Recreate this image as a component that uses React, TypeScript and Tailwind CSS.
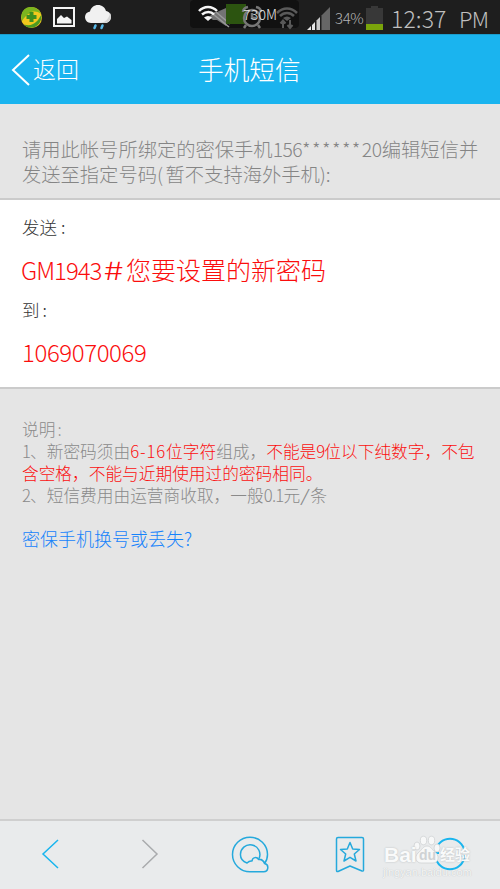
import React from 'react'

function StatusBar() {
    return (
        <div className="relative h-[35px] bg-[#1e1e1e] border-b border-[#1a9ccc]">
            <svg width="500" height="34" viewBox="0 0 500 34" fill="none">
                <circle cx="31.500" cy="17.500" r="10.500" fill="#f2c81d" />
                <path d="M22 13C24 8 29 6 34 7.500C38 8.500 40 11 41 14C37 11 33 11 30 13C26 15 24 18 22 21C21 18 21 15.500 22 13Z" fill="#7cb51f" />
                <path d="M41.500 15C42 20 39 25 35 27C31 28.500 27 28 24 24.500C29 26 33 25 36 22C39 19.500 39.500 17 41.500 15Z" fill="#4c9a22" />
                <path d="M31.500 12v10M26.500 17h10" stroke="#3c8f20" strokeWidth="4" />

                <rect x="54" y="8" width="20" height="18" stroke="#f4f4f4" strokeWidth="2" />
                <path d="M57 23.500V19L61 15L64 18L67 16.500L71.500 20V23.500Z" fill="#f4f4f4" />

                <path d="M91 23C87.500 23 85 20 85 17C85 14 87 12 90 11.500C91 7.500 94 5 98 5C102 5 105 7.500 106 11C109 11.500 111 14 111 17C111 20.500 108.500 23 105 23Z" fill="#f1f1f1" />
                <path d="M98 23C105 23 109 19 110 13C111.500 15 111.500 20 108 22C107 22.800 106 23 105 23Z" fill="#d5d5d5" />
                <path d="M95.500 25.500L94.500 28M102.500 25.500L101.500 28" stroke="#58b8e8" strokeWidth="2.500" strokeLinecap="round" />

                <rect x="190" y="0" width="109" height="28" rx="4" fill="#111111" />
                <path d="M209 17L214 12H217L226 8V26L217 20H213Z" fill="#737373" />
                <path d="M213 14L229 27M216 12L230 24" stroke="#9a9a9a" strokeWidth="1.500" />
                <path d="M199 11C204 5.500 212 5.500 217 11M202 14.500C206 11 211 11 214 14.500" stroke="#f5f5f5" strokeWidth="2.500" />
                <path d="M204 17.500Q208 14.500 212 17.500L208 21Z" fill="#f5f5f5" />
                <rect x="226" y="4" width="20" height="20" fill="#2c5410" />
                <circle cx="252" cy="18" r="8" stroke="#777777" strokeWidth="2.500" />
                <path d="M252 13v5h4M246 25L244 28M258 25L260 28" stroke="#777777" strokeWidth="2.500" />
                <path d="M243 12Q243 8 248 7M261 12Q261 8 256 7" stroke="#777777" strokeWidth="2.500" />
                <path d="M277 13C283 7 291 7 297 13M280 16C284 12 290 12 294 16" stroke="#5a5a5a" strokeWidth="2.500" />
                <path d="M283 18Q287 15 291 18L287 21Z" fill="#5a5a5a" />
                <path d="M283 28V21M280.500 23.500L283 20.500L285.500 23.500M290 20V28M287.500 25L290 28L292.500 25" stroke="#595959" strokeWidth="2" />

                <path d="M307 30L311 26V30ZM312 30V25L315 22V30Z" fill="#e6e6e6" />
                <path d="M316.500 30V20.500L320 17V30Z" fill="#c8c8c8" />
                <path d="M321.500 30V15.500L330 7V30Z" fill="#666666" />

                <path d="M366 8H371V6H378V8H383V24H366Z" fill="#383838" />
                <rect x="366" y="24" width="17" height="6" fill="#7aa40b" />
            </svg>
            <span className="absolute left-[243px] top-[4px] text-[14px] leading-5 tracking-[0.2px] text-[#e8e8e8]">730M</span>
            <span className="absolute left-[335px] top-[8px] text-[15px] leading-5 tracking-[-0.4px] text-[#b4b4b4]">34%</span>
            <span className="absolute left-[391px] top-[4px] whitespace-nowrap text-[23px] leading-7 tracking-[0.1px] text-[#bfbfbf]">12:37</span>
            <span className="absolute left-[459px] top-[4px] text-[22px] leading-7 tracking-[-0.8px] text-[#bfbfbf]">PM</span>
        </div>
    )
}

function Header() {
    return (
        <div className="relative flex h-[69px] items-center bg-[#1ab4ef] text-white">
            <svg className="ml-[11px]" width="20" height="32" viewBox="0 0 20 32" fill="none">
                <path d="M18 1L2 16L18 31" stroke="white" strokeWidth="2" />
            </svg>
            <span className="-mt-[3px] ml-[2px] text-[23px] leading-8">返回</span>
            <h1 className="absolute left-[198px] top-[16px] text-[25.700px] leading-9">手机短信</h1>
        </div>
    )
}

function Toolbar() {
    return (
        <div className="relative h-[70px] border-t-2 border-[#cfcfcf] bg-[#e9ebec]">
            <svg width="500" height="68" viewBox="0 821 500 68" fill="none" strokeWidth="1.500">
                <path d="M58 840L43 854L58 868" stroke="#19b5ee" />
                <path d="M142.500 840L157 854L142.500 868" stroke="#a9abad" />
                <g stroke="#25a9dc" strokeLinejoin="round">
                    <path d="M264.500 863.500C266.500 861 267.500 858 267.500 854.500A17.500 17.300 0 1 0 250 871.800H263.500A4.200 4.200 0 0 0 264.500 863.500C263 859.500 261 859 258.500 859.500C257 856.500 252.500 857 252 861C249 860.500 248 862 247 863C241.500 861 240.500 858 240.500 855A9.700 9.700 0 1 1 259 858.500" />
                    <path d="M338 837.500H362Q363.500 837.500 363.500 839V870Q363.500 871.500 362 871L350 866L338 871.500Q336.500 872 336.500 870V839Q336.500 837.500 338 837.500Z" />
                    <path d="M350 842.500L352.700 849L359.500 849.500L354.300 854L356 861L350 857.300L344 861L345.700 854L340.500 849.500L347.300 849Z" />
                </g>
                <path d="M435.500 851A14.700 14.700 0 0 1 464.500 851M464.500 857A14.700 14.700 0 0 1 435.500 857M435 853H439M461 856H465" stroke="#19b5ee" strokeWidth="2" />
                <g fill="#f7f8f8" stroke="#cfd2d3" strokeWidth="0.800">
                    <ellipse cx="417" cy="846" rx="3" ry="4" />
                    <ellipse cx="423.500" cy="840.500" rx="3.200" ry="4.300" />
                    <ellipse cx="431.500" cy="840.500" rx="3.200" ry="4.300" />
                    <ellipse cx="437" cy="848" rx="3" ry="4" />
                    <path d="M427 846C423 846 422 850 418 853C414 857 416 863 421 863H433C438 863 440 857 436 853C432 850 431 846 427 846Z" />
                </g>
            </svg>
            <span className="absolute left-[384px] top-[20px] font-['Liberation_Sans',sans-serif] text-[21px] font-bold leading-7 text-[#f9fafa] [text-shadow:0_0_2px_#b4b8ba]">Bai</span>
            <span className="absolute left-[419px] top-[22px] font-['Liberation_Sans',sans-serif] text-[14px] font-bold leading-6 text-[#cfd2d4]">du</span>
            <span className="absolute left-[440px] top-[23px] text-[15px] font-bold leading-5 text-[#f9fafa] [text-shadow:0_0_2px_#b4b8ba]">经验</span>
            <span className="absolute left-[383px] top-[43px] whitespace-nowrap font-['Liberation_Sans',sans-serif] text-[11px] leading-4 text-[#f6f7f7] [text-shadow:0_0_1px_#aeb2b4]">jingyan.baidu.com</span>
        </div>
    )
}

function App() {
    return (
        <div className="flex h-[889px] w-[500px] flex-col overflow-hidden bg-[#e5e5e5] font-['Noto_Sans_CJK_SC',sans-serif] font-light">
            <StatusBar />
            <Header />

            <div className="h-[96px] whitespace-nowrap border-b-2 border-[#cbcbcb] pl-[22px] pt-[33px] text-[19.300px] leading-[25px] text-[#858585]">
                <p>请用此帐号所绑定的密保手机<span className="tracking-[-0.5px]">156</span><span className="tracking-[1.4px]">******</span><span className="tracking-[-0.3px]">20</span>编辑短信并</p>
                <p>发送至指定号码<span className="tracking-[2.500px]">(</span>暂不支持海外手机<span>):</span></p>
            </div>

            <div className="h-[189px] whitespace-nowrap border-b-2 border-[#cbcbcb] bg-white pl-[22px] pt-[12px] text-[#333333]">
                <p className="text-[17.500px] leading-[30px]">发送<span className="ml-[4px]">:</span></p>
                <p className="mt-[9px] text-[25px] leading-[36px] text-[#fb0d0d]">
                    <span className="-ml-px inline-block w-[80px] text-[24px] tracking-[-1px]">GM1943</span>
                    <span className="inline-block w-[25px] scale-x-150 text-center">#</span>您要设置的新密码
                </p>
                <p className="mt-[7px] text-[17.500px] leading-[30px]">到<span className="ml-[3px]">:</span></p>
                <p className="mt-[9px] text-[24px] leading-[36px] tracking-[-0.400px] text-[#fb0d0d]">1069070069</p>
            </div>

            <div className="grow whitespace-nowrap pl-[22px] pt-[29px] text-[16.700px] leading-[22px] text-[#8a8a8a]">
                <p>说明<span className="ml-[2px]">:</span></p>
                <p>
                    <span className="tracking-[-0.9px]">1</span>、新密码须由
                    <span className="text-[#fb1010]"><span className="tracking-[0.9px]">6-16</span>位字符</span>组成，
                    <span className="text-[#fb1010]">不能是<span className="tracking-[-0.9px]">9</span>位以下纯数字，不包</span>
                </p>
                <p className="text-[#fb1010]">含空格，不能与近期使用过的密码相同。</p>
                <p><span className="tracking-[-0.9px]">2</span>、短信费用由运营商收取，一般<span className="tracking-[-0.7px]">0.1</span>元<span className="inline-block w-[10px] scale-x-150 text-center">/</span>条</p>
                <a href="#" className="mt-[19px] block text-[18px] leading-[26px] text-[#1683fb]">密保手机换号或丢失?</a>
            </div>

            <Toolbar />
        </div>
    )
}

export default App
